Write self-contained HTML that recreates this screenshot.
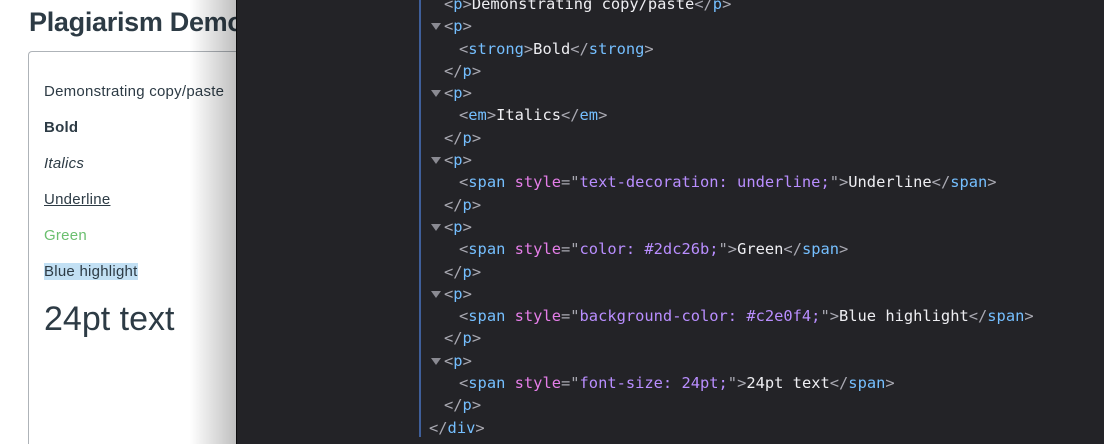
<!DOCTYPE html>
<html><head><style>
html,body{margin:0;width:1104px;height:444px;overflow:hidden;}
body{background:#fff;position:relative;font-family:"Liberation Sans",sans-serif;}
h1{position:absolute;left:29px;top:7px;margin:0;font-size:27px;font-weight:bold;color:#2d3b45;white-space:nowrap;letter-spacing:-0.3px}
.box{position:absolute;left:28px;top:51px;width:400px;height:393px;border:1px solid #aeb3b8;border-bottom:none;border-radius:4px 4px 0 0;box-sizing:border-box}
.p{position:absolute;left:44px;font-size:15px;letter-spacing:0.25px;color:#2d3b45;white-space:nowrap;line-height:18px}
.shadow{position:absolute;left:190px;top:0;width:46px;height:444px;background:linear-gradient(to right,rgba(0,0,0,0),rgba(0,0,0,0.25))}
.dev{position:absolute;left:236px;top:0;width:868px;height:444px;background:#232327;border-left:1px solid #0c0c0d;overflow:hidden}
.vl{position:absolute;left:182px;top:0;width:2px;height:437px;background:#3f5f9a}
.code{position:absolute;left:0;top:-7px;font-family:"DejaVu Sans Mono","Liberation Mono",monospace;font-size:15.4px;color:#eeeef2}
.l{height:22.3px;line-height:22.3px;white-space:pre;position:relative}
.l0{padding-left:192px}.l1{padding-left:207px}.l2{padding-left:222px}
.b{color:#a9a9b2}.t{color:#75bfff}.a{color:#e57ee8}.s{color:#b98eff}
.tri{position:absolute;left:194px;top:8px;width:0;height:0;border-left:5px solid transparent;border-right:5px solid transparent;border-top:7px solid #8a8a92}
</style></head><body>
<h1>Plagiarism Demonstration</h1>
<div class="box"></div>
<div class="p" style="top:83px">Demonstrating copy/paste</div>
<div class="p" style="top:119px;font-weight:bold">Bold</div>
<div class="p" style="top:155px;font-style:italic">Italics</div>
<div class="p" style="top:191px;text-decoration:underline">Underline</div>
<div class="p" style="top:227px;color:#6bbf6f">Green</div>
<div class="p" style="top:263px"><span style="background:#c2e0f4">Blue highlight</span></div>
<div class="p" style="top:298px;font-size:34px;line-height:42px;letter-spacing:0">24pt text</div>
<div class="shadow"></div>
<div class="dev">
<div class="vl"></div>
<div class="code">
<div class="l l1"><span class="b">&lt;</span><span class="t">p</span><span class="b">&gt;</span>Demonstrating copy/paste<span class="b">&lt;/</span><span class="t">p</span><span class="b">&gt;</span></div>
<div class="l l1"><i class="tri"></i><span class="b">&lt;</span><span class="t">p</span><span class="b">&gt;</span></div>
<div class="l l2"><span class="b">&lt;</span><span class="t">strong</span><span class="b">&gt;</span>Bold<span class="b">&lt;/</span><span class="t">strong</span><span class="b">&gt;</span></div>
<div class="l l1"><span class="b">&lt;/</span><span class="t">p</span><span class="b">&gt;</span></div>
<div class="l l1"><i class="tri"></i><span class="b">&lt;</span><span class="t">p</span><span class="b">&gt;</span></div>
<div class="l l2"><span class="b">&lt;</span><span class="t">em</span><span class="b">&gt;</span>Italics<span class="b">&lt;/</span><span class="t">em</span><span class="b">&gt;</span></div>
<div class="l l1"><span class="b">&lt;/</span><span class="t">p</span><span class="b">&gt;</span></div>
<div class="l l1"><i class="tri"></i><span class="b">&lt;</span><span class="t">p</span><span class="b">&gt;</span></div>
<div class="l l2"><span class="b">&lt;</span><span class="t">span</span> <span class="a">style</span><span class="b">="</span><span class="s">text-decoration: underline;</span><span class="b">"&gt;</span>Underline<span class="b">&lt;/</span><span class="t">span</span><span class="b">&gt;</span></div>
<div class="l l1"><span class="b">&lt;/</span><span class="t">p</span><span class="b">&gt;</span></div>
<div class="l l1"><i class="tri"></i><span class="b">&lt;</span><span class="t">p</span><span class="b">&gt;</span></div>
<div class="l l2"><span class="b">&lt;</span><span class="t">span</span> <span class="a">style</span><span class="b">="</span><span class="s">color: #2dc26b;</span><span class="b">"&gt;</span>Green<span class="b">&lt;/</span><span class="t">span</span><span class="b">&gt;</span></div>
<div class="l l1"><span class="b">&lt;/</span><span class="t">p</span><span class="b">&gt;</span></div>
<div class="l l1"><i class="tri"></i><span class="b">&lt;</span><span class="t">p</span><span class="b">&gt;</span></div>
<div class="l l2"><span class="b">&lt;</span><span class="t">span</span> <span class="a">style</span><span class="b">="</span><span class="s">background-color: #c2e0f4;</span><span class="b">"&gt;</span>Blue highlight<span class="b">&lt;/</span><span class="t">span</span><span class="b">&gt;</span></div>
<div class="l l1"><span class="b">&lt;/</span><span class="t">p</span><span class="b">&gt;</span></div>
<div class="l l1"><i class="tri"></i><span class="b">&lt;</span><span class="t">p</span><span class="b">&gt;</span></div>
<div class="l l2"><span class="b">&lt;</span><span class="t">span</span> <span class="a">style</span><span class="b">="</span><span class="s">font-size: 24pt;</span><span class="b">"&gt;</span>24pt text<span class="b">&lt;/</span><span class="t">span</span><span class="b">&gt;</span></div>
<div class="l l1"><span class="b">&lt;/</span><span class="t">p</span><span class="b">&gt;</span></div>
<div class="l l0"><span class="b">&lt;/</span><span class="t">div</span><span class="b">&gt;</span></div>
</div>
</div>
</body></html>
